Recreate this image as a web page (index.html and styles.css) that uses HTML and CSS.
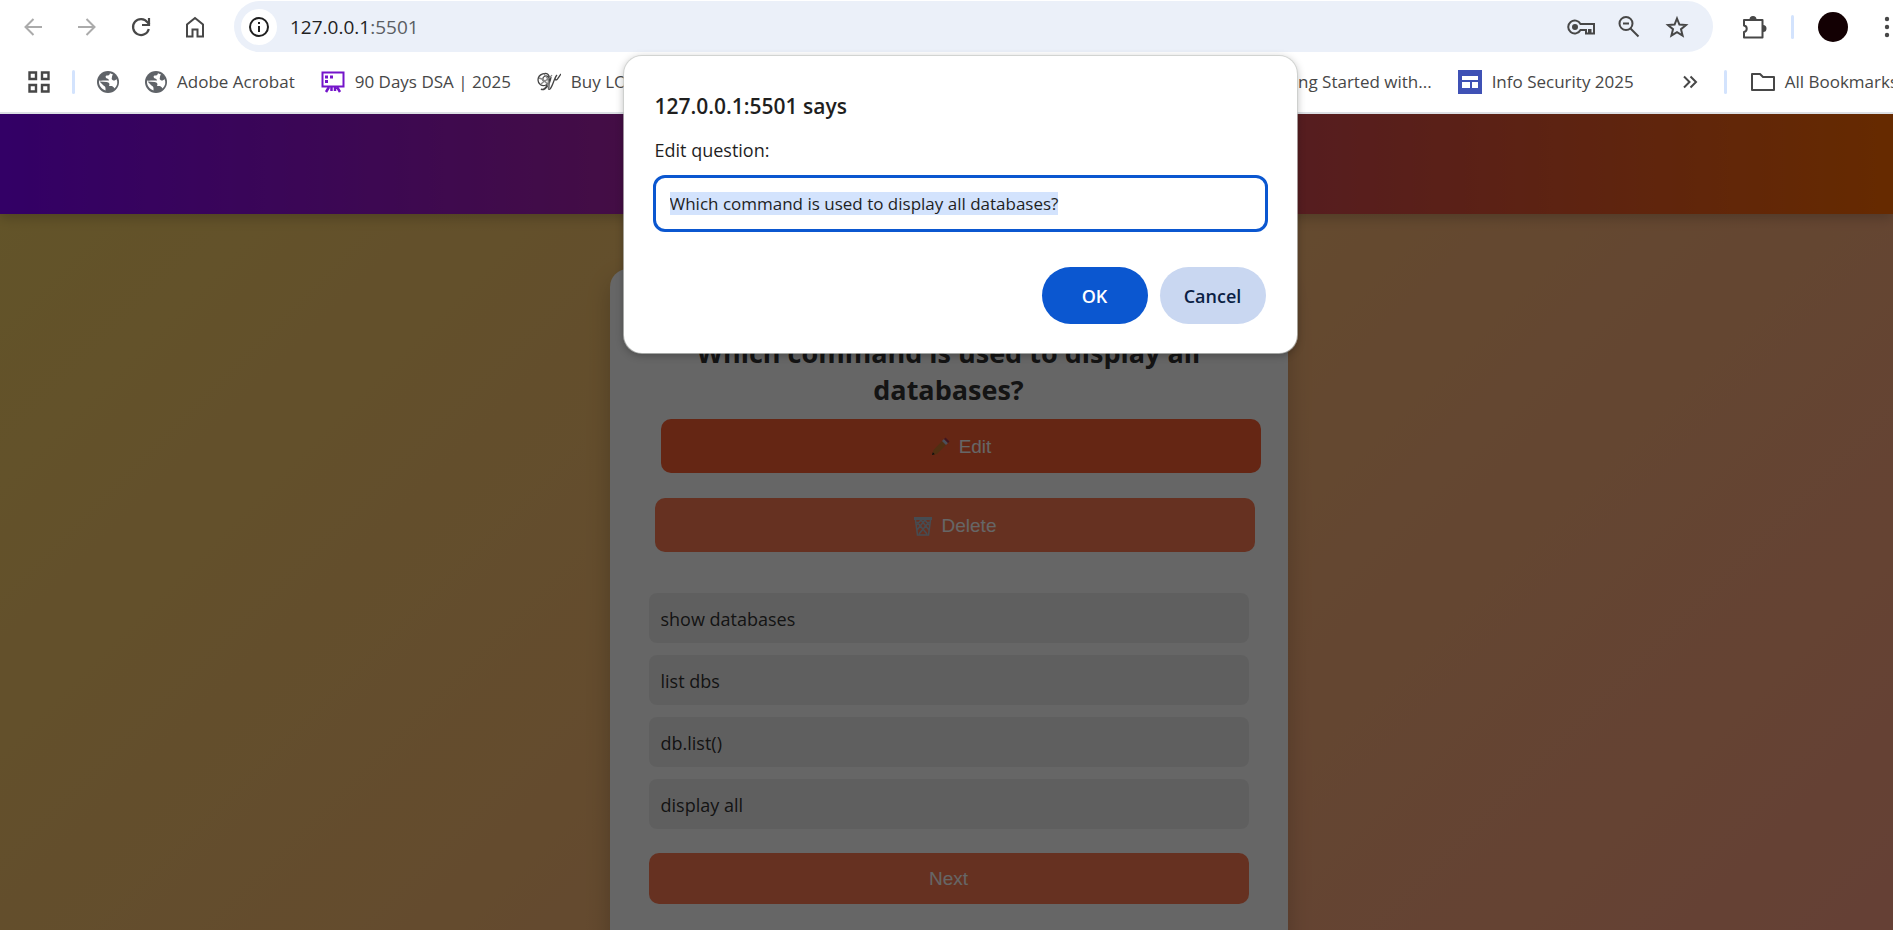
FILE: index.html
```html
<!DOCTYPE html>
<html lang="en">
<head>
<meta charset="utf-8">
<title>Quiz</title>
<link rel="stylesheet" href="styles.css">
</head>
<body>
<header class="chrome">
  <div class="toolbar">
    <nav class="nav-buttons" aria-label="Navigation">
      <button class="icon-btn faded" aria-label="Back"><svg width="24" height="24" viewBox="0 0 24 24" fill="none" stroke="currentColor" stroke-width="2"><path d="M21 12H5M12.500 4 4.500 12l8 8"/></svg></button>
      <button class="icon-btn faded" aria-label="Forward"><svg width="24" height="24" viewBox="0 0 24 24" fill="none" stroke="currentColor" stroke-width="2"><path d="M3 12h16M11.500 4l8 8-8 8"/></svg></button>
      <button class="icon-btn" aria-label="Reload"><svg width="24" height="24" viewBox="0 0 24 24" fill="none" stroke="currentColor" stroke-width="2.200"><path d="M19.800 14A8 8 0 1 1 18.500 7.300L20.500 9.500"/><path d="M20 3v7h-7"/></svg></button>
      <button class="icon-btn" aria-label="Home"><svg width="24" height="24" viewBox="0 0 24 24" fill="none" stroke="currentColor" stroke-width="2"><path d="M4 21.500V9.500l8-6.500 8 6.500v12h-5.500v-7h-5v7z"/></svg></button>
    </nav>
    <div class="omnibox">
      <button class="site-info" aria-label="View site information"><svg width="22" height="22" viewBox="0 0 22 22" fill="none" stroke="currentColor" stroke-width="2"><circle cx="11" cy="11" r="9"/><path d="M11 10v6M11 6v2"/></svg></button>
      <span class="url">127.0.0.1<span class="port">:5501</span></span>
      <div class="omni-actions">
        <button class="icon-btn" aria-label="Passwords"><svg width="28" height="18" viewBox="0 0 28 18" fill="none" stroke="currentColor" stroke-width="2"><path d="M13.500 6A6.500 6.500 0 1 0 13.500 12H19v3.500h3V12h1.500v3.500H27V6z"/><circle cx="8" cy="9" r="2" fill="currentColor"/></svg></button>
        <button class="icon-btn" aria-label="Zoom"><svg width="24" height="24" viewBox="0 0 24 24" fill="none" stroke="currentColor" stroke-width="2"><circle cx="9" cy="8.500" r="6.500"/><path d="M6 8.500h6M13.500 13.500l8 8"/></svg></button>
        <button class="icon-btn" aria-label="Bookmark this page"><svg width="24" height="24" viewBox="0 0 24 24" fill="none" stroke="currentColor" stroke-width="2"><path d="M12 3.500l2.400 6 6.600.5-5 4.200 1.600 6.500-5.600-3.500-5.600 3.500L8 14.200 3 10l6.600-.5z"/></svg></button>
      </div>
    </div>
    <div class="toolbar-end">
      <button class="icon-btn" aria-label="Extensions"><svg width="26" height="26" viewBox="0 0 26 26"><path d="M3 6h18.500v17.500H3v-5.500a3.300 3.300 0 0 0 0-6.500z" fill="none" stroke="currentColor" stroke-width="2" stroke-linejoin="round"/><path d="M8.500 5.500a3.500 3.500 0 0 1 7 0zM22 11a3.500 3.500 0 0 1 0 7z" fill="currentColor"/></svg></button>
      <span class="divider"></span>
      <button class="avatar" aria-label="Profile"></button>
      <button class="icon-btn menu" aria-label="Menu"><svg width="6" height="24" viewBox="0 0 6 24" fill="currentColor"><circle cx="3" cy="4" r="2.200"/><circle cx="3" cy="12" r="2.200"/><circle cx="3" cy="20" r="2.200"/></svg></button>
    </div>
  </div>
  <div class="bookmarks">
    <div class="marks-start">
      <button class="icon-btn" aria-label="Apps"><svg width="22" height="22" viewBox="0 0 22 22" fill="none" stroke="currentColor" stroke-width="2.400"><path d="M1.500 1.500h6.500v6.500H1.500zM14 1.500h6.500v6.500H14zM1.500 14h6.500v6.500H1.500zM14 14h6.500v6.500H14z"/></svg></button>
      <span class="divider"></span>
      <a class="mark" href="#" aria-label="Website"><svg width="22" height="22" viewBox="0 0 22 22"><circle cx="11" cy="11" r="11" fill="#5f6368"/><path d="M13 2.200c-.5 2-1.500 2.300-3.500 2.300C8 5 8.500 7 10 7.500c1 .5 2 .5 2 2H7.500C6 9.500 4 10 2 9.500c-.5 5 2.500 8.500 6.500 10v-2.300C8.500 15.500 7 15 6 14l-3.500-3.500 7 .5c3 .5 3.500 2 2.500 4h3c1.500 1 2 1.500 2.500 2.500 3-3 3.500-6 2-9.500-1 1.500-2.500 2-4 1C14 8 15 7 15 6s.5-2 1-2.500z" fill="#fff"/></svg></a>
      <a class="mark" href="#"><svg width="22" height="22" viewBox="0 0 22 22"><circle cx="11" cy="11" r="11" fill="#5f6368"/><path d="M13 2.200c-.5 2-1.500 2.300-3.500 2.300C8 5 8.500 7 10 7.500c1 .5 2 .5 2 2H7.500C6 9.500 4 10 2 9.500c-.5 5 2.500 8.500 6.500 10v-2.300C8.500 15.500 7 15 6 14l-3.500-3.500 7 .5c3 .5 3.500 2 2.500 4h3c1.500 1 2 1.500 2.500 2.500 3-3 3.500-6 2-9.500-1 1.500-2.500 2-4 1C14 8 15 7 15 6s.5-2 1-2.500z" fill="#fff"/></svg>Adobe Acrobat</a>
      <a class="mark" href="#"><svg width="24" height="22" viewBox="0 0 24 22" fill="none" stroke="#7414ca" stroke-width="2"><path d="M1.500 1.500h21v14h-21z"/><path d="M4 6h3M9 6h3M4 10.500h3" stroke-width="3"/><path d="M8 16l-3 5M10.500 16v4M14 16v4M16 16l3 5" stroke-width="2.500"/></svg>90 Days DSA | 2025</a>
      <a class="mark" href="#"><svg width="24" height="20" viewBox="0 0 24 20" fill="none" stroke="#444" stroke-width="1.300"><path d="M8 9C5 10 5 5 8 4c5-1 5 7 1 9-4 2-8-1-8-5 0-6 9-9 11-4 2 5-4 15-8 13 3 3 9-4 10-12-2 7-4 14-1 12 3-3 4-11 7-14-1 1-3 5-1 5 2 0 3-4 5-6"/><path d="M2 6c5 1 8 5 10 9M7 2c3 3 6 8 5 15M4 12c4-4 8-4 11-9" stroke="#888"/></svg>Buy LOW</a>
    </div>
    <div class="marks-end">
      <a class="mark" href="#">Getting Started with...</a>
      <a class="mark" href="#"><svg width="24" height="24" viewBox="0 0 24 24"><path fill="#3f51b5" d="M0 0h24v24H0z"/><path fill="#fff" d="M4 6h16v4H4zM4 12h8v6H4zM14 12h6v6h-6z"/></svg>Info Security 2025</a>
      <button class="icon-btn more" aria-label="More bookmarks"><svg width="16" height="14" viewBox="0 0 16 14" fill="none" stroke="currentColor" stroke-width="2"><path d="M2 1.500 7.500 7 2 12.500M8.500 1.500 14 7l-5.500 5.500"/></svg></button>
      <span class="divider"></span>
      <a class="mark folder" href="#"><svg width="24" height="18" viewBox="0 0 24 18" fill="none" stroke="#474747" stroke-width="2" stroke-linejoin="round"><path d="M1 1h8l3 3h11v13H1z"/></svg>All Bookmarks</a>
    </div>
  </div>
</header>

<div class="page">
  <div class="banner"></div>
  <main class="stage">
    <section class="card">
      <h2 class="question">Which command is used to display all databases?</h2>
      <button class="btn edit"><svg width="20" height="20" viewBox="0 0 20 20"><path d="M2 18l1.500-5L12 4l4 4-9 9z" fill="#c8752f"/><path d="M12 4l2-2 4 4-2 2z" fill="#b8c6e0"/><path d="M14 2l1.500-1.500 4 4L18 6z" fill="#a03850"/><path d="M2 18l.800-2.800 2 2z" fill="#222"/></svg>Edit</button>
      <button class="btn delete"><svg width="20" height="20" viewBox="0 0 20 20" fill="none" stroke="#aebfce" stroke-width="1.500"><path d="M1 2.500h18" stroke-width="3"/><path d="M2.500 4l2 15h11l2-15M4 6l10 12M8 4l8 10M12 4l4 5M16 6L6 18M12 4L4 14M8 4L3.500 9"/></svg>Delete</button>
      <ul class="options">
        <li>show databases</li>
        <li>list dbs</li>
        <li>db.list()</li>
        <li>display all</li>
      </ul>
      <button class="btn next">Next</button>
    </section>
  </main>
  <div class="scrim"></div>
</div>

<form class="prompt" role="dialog" aria-labelledby="prompt-title">
  <h1 class="prompt-title" id="prompt-title">127.0.0.1:5501 says</h1>
  <label class="prompt-label" for="answer">Edit question:</label>
  <input class="prompt-input" id="answer" type="text" value="Which command is used to display all databases?" autofocus>
  <div class="prompt-actions">
    <button class="pill primary" type="submit">OK</button>
    <button class="pill" type="button">Cancel</button>
  </div>
</form>
<script src="script.js"></script>
</body>
</html>
```
FILE: styles.css
```css
* { box-sizing: border-box; }

body {
  margin: 0;
  height: 100vh;
  display: flex;
  flex-direction: column;
  overflow: hidden;
  font-family: "Open Sans", "Noto Sans", sans-serif;
  color: #1f1f1f;
}

button { font: inherit; border: 0; cursor: pointer; }
svg { display: block; flex: none; }

/* Browser chrome */
.chrome {
  flex: none;
  background: #fff;
  border-bottom: 2px solid #dcdfe4;
}
.toolbar {
  display: flex;
  align-items: center;
  padding: 1px 3px 0 6px;
}
.nav-buttons { display: flex; width: 228px; }
.icon-btn {
  display: grid;
  place-items: center;
  width: 54px;
  padding: 0;
  background: none;
  color: #474747;
}
.faded { color: #ababab; }
.omnibox {
  flex: 1;
  display: flex;
  align-items: center;
  height: 51px;
  padding: 0 12px 0 7px;
  border-radius: 26px;
  background: #ebf0f9;
}
.site-info {
  display: grid;
  place-items: center;
  width: 36px;
  height: 36px;
  padding: 0;
  border-radius: 50%;
  background: #fff;
  color: #1f1f1f;
}
.url { flex: 1; margin-left: 13px; font-size: 19px; line-height: 26px; }
.port { color: #5a5d63; }
.omni-actions { display: flex; }
.omni-actions .icon-btn { width: 48px; }
.toolbar-end {
  display: flex;
  align-items: center;
  padding-left: 14px;
}
.divider {
  flex: none;
  width: 3px;
  height: 24px;
  border-radius: 2px;
  background: #d3e3fd;
}
.toolbar-end .divider { margin: 0 24px 0 10px; }
.avatar {
  width: 30px;
  height: 30px;
  padding: 0;
  border-radius: 50%;
  background: #130003;
}
.icon-btn.menu { width: 6px; margin-left: 36px; }

.bookmarks {
  display: flex;
  justify-content: space-between;
  height: 60px;
  margin-right: -5px;
  padding: 0 0 1px 28px;
  color: #474747;
  font-size: 17px;
}
.marks-start, .marks-end { display: flex; align-items: center; }
.marks-start { gap: 26px; }
.marks-start .icon-btn { width: 22px; }
.marks-start .divider { margin: 0 -4px; }
.mark {
  display: flex;
  align-items: center;
  gap: 10px;
  color: inherit;
  text-decoration: none;
  white-space: nowrap;
}
.marks-end { gap: 26px; }
.icon-btn.more { width: 16px; margin-left: 22px; }
.folder { margin-left: -2px; }

/* Quiz page */
.page {
  position: relative;
  flex: 1;
  min-height: 0;
  display: flex;
  flex-direction: column;
  overflow: hidden;
  background: linear-gradient(135deg, #f6d365, #fda085);
}
.banner {
  flex: none;
  height: 100px;
  background: linear-gradient(90deg, #7f00ff, #ff6a00);
  box-shadow: 0 4px 12px rgba(0, 0, 0, 0.2);
}
.stage {
  flex: none;
  display: flex;
  justify-content: center;
  padding: 55px 0 0 4px;
}
.card {
  width: 678px;
  padding: 65px 39px 60px;
  border-radius: 18px;
  background: #fff;
  box-shadow: 0 10px 24px rgba(0, 0, 0, 0.2);
}
.question {
  margin: 0 0 11px;
  font-size: 27px;
  line-height: 37px;
  font-weight: 700;
  text-align: center;
  color: #333;
}
.btn {
  display: flex;
  align-items: center;
  justify-content: center;
  gap: 9px;
  width: 100%;
  height: 54px;
  padding: 2px 0 0;
  border-radius: 10px;
  background: #ff7b54;
  color: #fff;
  font-family: "Liberation Sans", Arial, sans-serif;
  font-size: 19px;
}
.edit { margin: 0 0 25px 12px; background: #fd5f33; }
.delete { margin-left: 6px; }
.options {
  display: grid;
  gap: 12px;
  margin: 41px 0 24px;
  padding: 0;
  list-style: none;
}
.options li {
  padding: 13px 12px 11px;
  border-radius: 8px;
  background: #eee;
  color: #333;
  font-size: 18px;
  line-height: 26px;
}
.next { height: 51px; padding: 0; }
.scrim {
  position: absolute;
  inset: 0;
  background: rgba(0, 0, 0, 0.6);
}

/* Prompt dialog */
.prompt {
  position: absolute;
  top: 56px;
  left: calc(50% - 323px);
  width: 673px;
  display: flex;
  flex-direction: column;
  padding: 34px 29px 29px;
  border-radius: 18px;
  background: #fff;
  box-shadow: 0 0 0 1px rgba(200, 203, 200, 0.7), 0 2px 8px rgba(0, 0, 0, 0.3);
}
.prompt-title {
  margin: 0 2px 14px;
  font-size: 21px;
  line-height: 32px;
  font-weight: 600;
}
.prompt-label {
  margin: 0 2px 11px;
  font-size: 18px;
  line-height: 28px;
}
.prompt-input {
  width: 100%;
  height: 57px;
  padding: 0 14px;
  border: 3px solid #0b57d0;
  border-radius: 12px;
  outline: 0;
  background: #fff;
  color: #1f1f1f;
  font: inherit;
  font-size: 17px;
}
.prompt-input::selection { background: #d3e3fd; color: #1f1f1f; }
.prompt-actions {
  display: flex;
  justify-content: flex-end;
  gap: 12px;
  margin: 35px 2px 0;
}
.pill {
  width: 106px;
  height: 57px;
  padding: 0;
  border-radius: 29px;
  background: #c9d7f1;
  color: #0b1f45;
  font-size: 18px;
  font-weight: 600;
}
.primary { background: #0b57d0; color: #fff; }
```
FILE: script.js
```js
const answer = document.getElementById("answer");
answer.focus();
answer.select();
```
